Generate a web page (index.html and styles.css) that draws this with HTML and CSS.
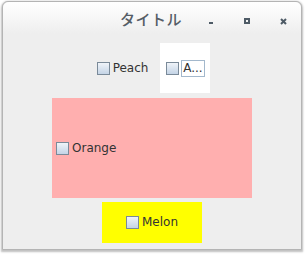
FILE: index.html
```html
<!DOCTYPE html>
<html>
<head>
<meta charset="utf-8">
<link rel="stylesheet" href="styles.css">
</head>
<body>
<div class="window">
  <div class="titlebar">
    <span class="title">タイトル</span>
    <span class="btn btn-min"></span>
    <span class="btn btn-max"></span>
    <span class="btn btn-close">
      <svg width="7" height="7" viewBox="0 0 7 7"><path d="M1 1L6 6M6 1L1 6" stroke="#4e5b66" stroke-width="2"/><rect x="2.5" y="2.5" width="2" height="2" fill="#4e5b66"/></svg>
    </span>
  </div>
  <div class="content">
    <div class="row1">
      <label class="cb"><span class="box"></span><span class="txt">Peach</span></label>
      <div class="white">
        <label class="cb"><span class="box"></span><span class="txt focus">A...</span></label>
      </div>
    </div>
    <div class="pink">
      <label class="cb"><span class="box"></span><span class="txt">Orange</span></label>
    </div>
    <div class="yellow">
      <label class="cb"><span class="box"></span><span class="txt">Melon</span></label>
    </div>
  </div>
</div>
</body>
</html>
```

FILE: styles.css
```css
html, body {
  margin: 0;
  padding: 0;
  background: #ffffff;
  width: 305px;
  height: 254px;
  overflow: hidden;
}
.window {
  position: relative;
  margin: 1px 0 0 2px;
  width: 298px;
  height: 247px;
  border: 1px solid #b4b4b4;
  border-radius: 6px 6px 0 0;
  background: #eeeeee;
  box-shadow: 0 1px 2px 1px rgba(0,0,0,0.25);
  font-family: "DejaVu Sans", sans-serif;
  font-size: 12px;
  color: #333333;
  display: flex;
  flex-direction: column;
}
.titlebar {
  height: 32px;
  border-radius: 6px 6px 0 0;
  background: linear-gradient(#ffffff, #eeeeee);
  display: flex;
  align-items: center;
  position: relative;
}
.title {
  position: absolute;
  left: 117px;
  top: 6px;
  font-family: "Noto Sans CJK JP", sans-serif;
  font-size: 15px;
  font-weight: 500;
  color: #555d66;
  letter-spacing: 0.5px;
}
.btn {
  position: absolute;
  display: block;
}
.btn-min {
  left: 206px;
  top: 20px;
  width: 4px;
  height: 2px;
  background: #4e5b66;
}
.btn-max {
  left: 241px;
  top: 16px;
  width: 2px;
  height: 2px;
  border: 2px solid #4e5b66;
}
.btn-close {
  left: 277px;
  top: 16px;
  width: 7px;
  height: 7px;
  line-height: 0;
}
.content {
  display: flex;
  flex-direction: column;
  align-items: center;
  padding-top: 9px;
}
.row1 {
  display: flex;
  align-items: center;
  margin-left: 3px;
}
.row1 > .cb {
  margin-right: 12px;
}
.white {
  width: 50px;
  height: 50px;
  background: #ffffff;
  display: flex;
  align-items: center;
  justify-content: center;
}
.pink {
  width: 200px;
  height: 100px;
  margin-top: 5px;
  background: #ffafaf;
  display: flex;
  align-items: center;
  padding-left: 4px;
  box-sizing: border-box;
}
.yellow {
  width: 100px;
  height: 41px;
  margin-top: 4px;
  background: #ffff00;
  display: flex;
  align-items: center;
  justify-content: center;
}
.cb {
  display: flex;
  align-items: center;
}
.box {
  display: block;
  width: 11px;
  height: 11px;
  border: 1px solid #7a8a99;
  background: linear-gradient(#f0f4f9, #c4d4e6);
  margin-right: 3px;
}
.txt {
  line-height: 15px;
}
.focus {
  border: 1px solid #a3b8cc;
  padding: 0 1px;
  margin-left: -1px;
}
```
